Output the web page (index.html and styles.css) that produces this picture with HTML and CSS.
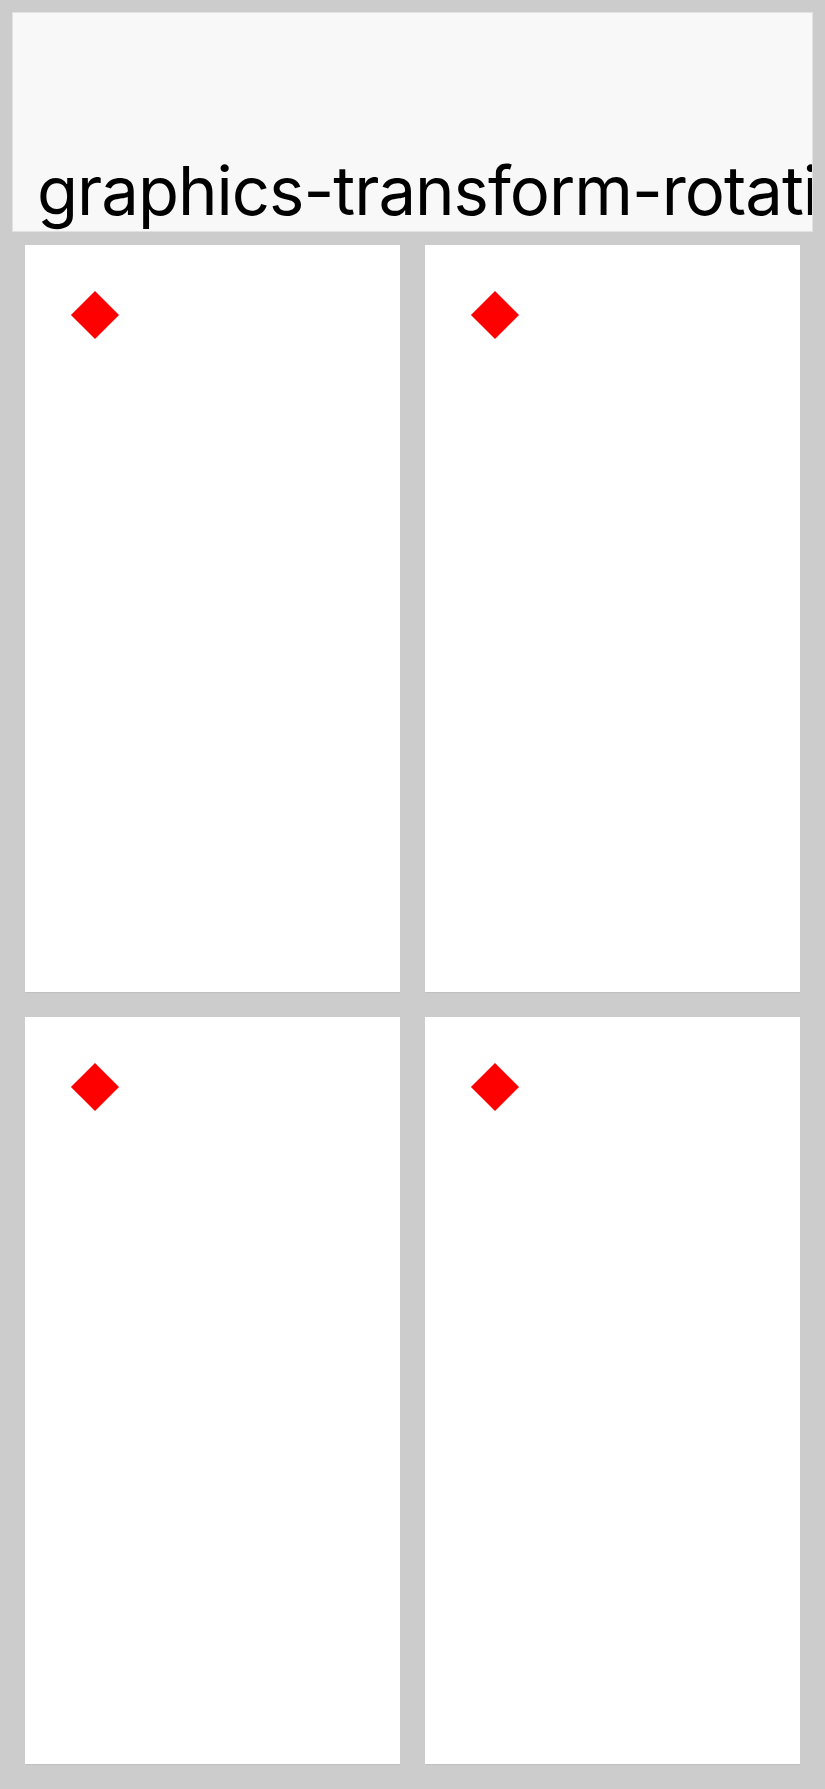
FILE: index.html
```html
<!DOCTYPE html>
<html lang="en">
<head>
  <meta charset="UTF-8" />
  <meta name="viewport" content="width=device-width, initial-scale=1.0" />
  <title>graphics-transform-rotation</title>
  <link rel="stylesheet" href="styles.css">
</head>
<body>
  <div class="page">
    <header class="title-bar">
      <h1>graphics-transform-rotation</h1>
    </header>

    <main class="grid">
      <div class="cell"><div class="diamond"></div></div>
      <div class="cell"><div class="diamond"></div></div>
      <div class="cell"><div class="diamond"></div></div>
      <div class="cell"><div class="diamond"></div></div>
    </main>
  </div>
</body>
</html>
```

FILE: styles.css
```css
body {
  margin: 0;
  padding: 0;
  background-color: #cccccc;
  font-family: Inter, "Noto Sans", sans-serif;
}
.page {
  padding: 12px;
}
.title-bar {
  box-sizing: border-box;
  height: 220px;
  background-color: #f8f8f8;
  border: 1px solid #e2e2e2;
  display: flex;
  align-items: flex-end;
  padding: 0 0 0 24px;
  overflow: hidden;
}
.title-bar h1 {
  margin: 0;
  font-size: 67px;
  font-weight: 400;
  letter-spacing: -1px;
  color: #000;
  white-space: nowrap;
}
.grid {
  display: grid;
  grid-template-columns: 1fr 1fr;
  grid-auto-rows: 747px;
  gap: 25px;
  padding: 13px;
}
.cell {
  background-color: #fff;
  padding: 53px;
  box-shadow: 0 1px 0 rgba(0, 0, 0, 0.06);
}
.diamond {
  width: 34px;
  height: 34px;
  background-color: red;
  transform: rotate(45deg);
}
```
